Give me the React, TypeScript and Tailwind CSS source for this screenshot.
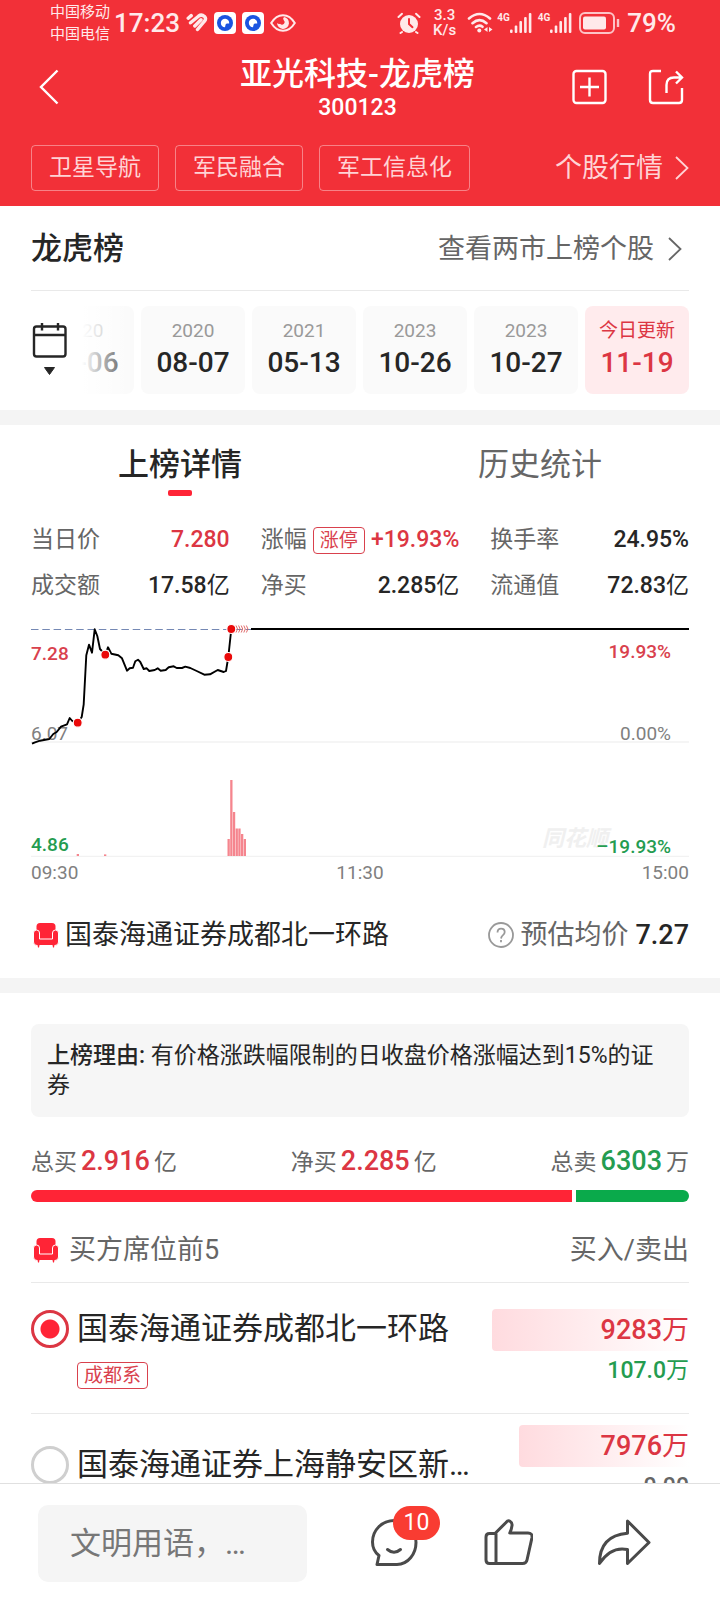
import { useState } from "react";

const tags = ["卫星导航", "军民融合", "军工信息化"];

const dates = [
  { year: "2020", day: "07-06" },
  { year: "2020", day: "08-07" },
  { year: "2021", day: "05-13" },
  { year: "2023", day: "10-26" },
  { year: "2023", day: "10-27" },
  { year: "今日更新", day: "11-19", active: true },
];

const stats = [
  { label: "当日价", value: "7.280", rise: true },
  { label: "涨幅", value: "+19.93%", rise: true, badge: "涨停" },
  { label: "换手率", value: "24.95%" },
  { label: "成交额", value: "17.58", unit: "亿" },
  { label: "净买", value: "2.285", unit: "亿" },
  { label: "流通值", value: "72.83", unit: "亿" },
];

const seats = [
  { id: "seat1", name: "国泰海通证券成都北一环路", tag: "成都系", buy: "9283", sell: "107.0", sellUnit: "万", share: 100 },
  { id: "seat2", name: "国泰海通证券上海静安区新…", buy: "7976", sell: "0.00", share: 86 },
];

const pricePath =
  "M1 126.7 4 125.3 9 123.7 18.3 122 22.3 117 25.7 115 30 109.7 36 107.3 38.7 101 41.3 104 46.7 105.7 50.7 100 52.7 87.3 55.3 38.3 58 27.7 61 35.7 63.7 12.3 66.3 19 69 32 74.3 37.7 77 30.3 80.3 36.7 87.3 38.3 91 41.3 96 53.7 98.7 51.3 102 50.7 104.3 44.3 107 42.7 109.3 45 112.7 52 115.7 51.3 118.3 54 123.7 53 126.7 51.3 129.7 53.7 134.7 53 137.7 50.3 142.7 49.3 145.7 51 151 51 154.3 49.7 159.3 51 165.7 54 173.3 57.7 179 57.3 186.7 53 192.7 55 195 54 197.3 40 200.3 12";

const volumes = [
  [196.5, 17],
  [199.2, 76],
  [201.9, 44],
  [204.6, 27.5],
  [207.3, 27.5],
  [210, 22],
  [212.7, 17],
  [45.7, 2],
  [73, 1.6],
];

function Chevron({ className }: { className: string }) {
  return (
    <svg viewBox="0 0 14 24" className={className} fill="none" stroke="currentColor" strokeWidth="1.8" aria-hidden="true">
      <path d="M1 1 12.5 12 1 23" />
    </svg>
  );
}

function Armchair() {
  return (
    <svg viewBox="0 0 26 26" className="size-[26px] shrink-0" fill="#ff2436" aria-hidden="true">
      <path d="M3.500 8V4.500Q3.500 1 7 1h12q3.500 0 3.500 3.500V18h-19z" />
      <path d="M.5 11q0-3 3-3t3 3v6h13v-6q0-3 3-3t3 3v9q0 3.500-3.500 3.500H4Q.5 23.500.5 20z" stroke="#fff" strokeWidth="1" />
      <path d="M4.500 23h2l-.5 2.500h-1zM19.500 23h2l-.5 2.500h-1z" />
    </svg>
  );
}

function AppBadge() {
  return (
    <svg viewBox="0 0 22 22" className="size-[22px]" aria-hidden="true">
      <rect width="22" height="22" rx="4" fill="#fff" />
      <circle cx="11" cy="11" r="8" fill="#1b54e0" />
      <path d="M11 15.200A4.200 4.200 0 1 1 15.200 11.500L13 11.500Q11.500 11.500 11.500 13z" fill="#fff" />
    </svg>
  );
}

function Signal() {
  return (
    <div className="flex items-start">
      <span className="text-[10px] leading-[12px] font-bold">4G</span>
      <svg viewBox="0 0 23 22" className="h-[22px] w-[23px]" fill="currentColor" aria-hidden="true">
        <rect x="0" y="17.500" width="2.600" height="3.500" rx="1" />
        <rect x="4.700" y="13.500" width="2.600" height="7.500" rx="1" />
        <rect x="9.400" y="9" width="2.600" height="12" rx="1" />
        <rect x="14.100" y="5" width="2.600" height="16" rx="1" />
        <rect x="18.800" y="1" width="2.600" height="20" rx="1" />
      </svg>
    </div>
  );
}

function StatusBar() {
  return (
    <div className="flex h-[46px] items-center justify-between pr-[44px] pl-[50px] text-[#ffe9ea]">
      <div className="flex items-center">
        <div className="text-[15px] leading-[22px]">
          <div>中国移动</div>
          <div>中国电信</div>
        </div>
        <span className="ml-1 text-[26px] leading-[30px] font-medium">17:23</span>
        <svg viewBox="0 0 22 20" className="ml-[6px] h-5 w-[22px]" fill="none" stroke="currentColor" strokeWidth="3.400" strokeLinecap="round" strokeLinejoin="round" aria-hidden="true">
          <path d="M2.200 5.200 5.200 2.600M4.500 9.800 12.500 3.200q3-2.300 6 .3 2.200 2.300-.3 5L11.500 16.500M8.800 13 15 6.800" />
        </svg>
        <div className="ml-[6px] flex gap-[6px]">
          <AppBadge />
          <AppBadge />
        </div>
        <svg viewBox="0 0 26 18" className="ml-[6px] h-[18px] w-[26px]" fill="none" stroke="currentColor" strokeWidth="2" aria-hidden="true">
          <path d="M1.200 9Q6 1.200 13 1.200T24.800 9Q20 16.800 13 16.800T1.200 9z" />
          <path d="M14 3a6 6 0 1 1-7 6q1.500 1.500 3 .8 2 1.700 4 0 1.500-2-.5-4-1-1.300.5-2.800z" fill="currentColor" stroke="none" />
        </svg>
      </div>
      <div className="flex items-center">
        <svg viewBox="0 0 24 22" className="h-[22px] w-6" fill="none" stroke="currentColor" strokeWidth="2" strokeLinecap="round" aria-hidden="true">
          <circle cx="12" cy="12" r="9" fill="currentColor" stroke="none" />
          <path d="M1.500 5 5 1.800M22.500 5 19 1.800M5 20l-1.500 1M19 20l1.500 1" />
          <path d="M12 7v5l3.500 3.200" stroke="#f23038" />
        </svg>
        <div className="ml-[12px] text-center text-[15px] leading-[15px] font-medium">
          <div>3.3</div>
          <div>K/s</div>
        </div>
        <svg viewBox="0 0 26 22" className="ml-[11px] h-[22px] w-[26px]" fill="none" stroke="currentColor" strokeWidth="2.600" strokeLinecap="round" aria-hidden="true">
          <path d="M2 6.500Q12.500-2.500 23 6.500M5.500 11.200q7-6 14 0M9 15q3.500-2.500 6.500-.2" />
          <circle cx="12.300" cy="18.500" r="2" fill="currentColor" stroke="none" />
          <path d="M20.500 15v5l-3.500-2.500zM22 15v5l3.500-2.500z" fill="currentColor" stroke="none" />
        </svg>
        <div className="ml-1 flex gap-[5px]">
          <Signal />
          <Signal />
        </div>
        <svg viewBox="0 0 42 22" className="ml-[6px] h-[22px] w-[42px]" fill="none" aria-hidden="true">
          <rect x="1" y="1" width="34" height="20" rx="5" stroke="currentColor" strokeWidth="2" opacity=".8" />
          <rect x="4" y="4.500" width="23" height="13" rx="2" fill="currentColor" />
          <path d="M39 7v8" stroke="currentColor" strokeWidth="2.400" opacity=".8" />
        </svg>
        <span className="ml-[6px] text-[26px] leading-[30px] font-medium">79%</span>
      </div>
    </div>
  );
}

function Header() {
  return (
    <header className="shrink-0 bg-[#f23038] pb-[15px] text-white">
      <StatusBar />
      <div className="grid h-[82px] grid-cols-[1fr_auto_1fr] items-center pr-[36px] pl-[31px]">
        <button type="button" aria-label="返回" className="justify-self-start px-2">
          <svg viewBox="0 0 20 36" className="h-9 w-5" fill="none" stroke="currentColor" strokeWidth="2.400" aria-hidden="true">
            <path d="M18.500 1.500 2 18l16.500 16.500" />
          </svg>
        </button>
        <div className="pt-[3px] text-center">
          <h1 className="text-[32px] leading-[38px] font-medium">亚光科技-龙虎榜</h1>
          <div className="text-[23px] leading-[30px] font-medium">300123</div>
        </div>
        <div className="flex gap-10 justify-self-end">
          <button type="button" aria-label="添加自选">
            <svg viewBox="0 0 36 36" className="size-9" fill="none" stroke="currentColor" strokeWidth="2.400" aria-hidden="true">
              <rect x="1.500" y="2" width="32" height="32" rx="3" />
              <path d="M8 18h19M17.500 8.500v19" />
            </svg>
          </button>
          <button type="button" aria-label="分享">
            <svg viewBox="0 0 36 36" className="size-9" fill="none" stroke="currentColor" strokeWidth="2.400" aria-hidden="true">
              <path d="M13 2H5Q2 2 2 5v26q0 3 3 3h26q3 0 3-3V19" />
              <path d="M18.500 24v-8q0-7.500 7.500-7.500h8M28 2.500l6 6-6 6" />
            </svg>
          </button>
        </div>
      </div>
      <div className="mt-[17px] flex items-center justify-between px-[31px] text-[#ffd3d5]">
        <div className="flex gap-4">
          {tags.map((t) => (
            <a key={t} href="#" className="rounded-[4px] border border-white/40 px-[17px] text-[23px] leading-[44px]">
              {t}
            </a>
          ))}
        </div>
        <a href="#" className="flex items-center gap-3 text-[27px] leading-[44px]">
          个股行情
          <Chevron className="h-6 w-[14px]" />
        </a>
      </div>
    </header>
  );
}

function DatePicker() {
  return (
    <section className="border-b-[15px] border-[#f4f4f4] px-[31px] pb-4">
      <div className="flex h-[85px] items-center justify-between border-b border-[#e9e9e9] pt-[2px]">
        <h2 className="text-[31px] leading-[40px] font-medium text-[#262626]">龙虎榜</h2>
        <a href="#" className="flex items-center gap-[14px] pr-[7px] text-[27px] leading-[40px] text-[#666]">
          查看两市上榜个股
          <Chevron className="h-6 w-[14px]" />
        </a>
      </div>
      <div className="mt-[15px] flex items-center">
        <button type="button" aria-label="选择日期" className="w-[51px] shrink-0">
          <svg viewBox="0 0 36 54" className="h-[54px] w-9" fill="none" stroke="#262626" strokeWidth="2.400" aria-hidden="true">
            <rect x="3" y="3.500" width="31.500" height="30" rx="2.500" />
            <path d="M3 12h31.500M11 0v7.500M27 0v7.500" />
            <path d="M13.500 44.500h10l-5 7z" fill="#262626" stroke="#262626" strokeWidth="1" />
          </svg>
        </button>
        <div className="relative flex min-w-0 flex-1 justify-end gap-[7px] overflow-hidden">
          {dates.map((d) => (
            <button
              key={d.day}
              type="button"
              className={
                d.active
                  ? "flex h-[88px] w-[104px] shrink-0 flex-col items-center rounded-lg bg-[#ffebed] pt-[10px] text-[#dc3643]"
                  : "flex h-[88px] w-[104px] shrink-0 flex-col items-center rounded-lg bg-[#fafafa] pt-[10px] text-[#262626]"
              }
            >
              <span className={d.active ? "text-[19px] leading-[30px]" : "text-[19px] leading-[30px] text-[#999]"}>{d.year}</span>
              <span className="text-[28px] leading-[34px] font-medium">{d.day}</span>
            </button>
          ))}
          <div className="absolute inset-y-0 left-0 w-12 bg-linear-to-r from-white to-white/20" />
        </div>
      </div>
    </section>
  );
}

function Chart() {
  return (
    <div>
      <svg viewBox="0 0 658 240" className="block w-full" role="img" aria-label="分时走势" fontSize="19">
        <path d="M0 125h658M0 239.500h658" stroke="#f2f2f2" strokeWidth="1.500" />
        <text x="511" y="229" fontSize="22" fontWeight="700" fontStyle="italic" fill="#f0f0f0">同花顺</text>
        <g fill="#808080">
          <text x="0" y="123">6.07</text>
          <text x="640" y="123" textAnchor="end">0.00%</text>
        </g>
        <g fill="#d9414d" fontWeight="500">
          <text x="0" y="43">7.28</text>
          <text x="640" y="41" textAnchor="end">19.93%</text>
        </g>
        <g fill="#249c50" fontWeight="500">
          <text x="0" y="234">4.86</text>
          <text x="640" y="236" textAnchor="end">–19.93%</text>
        </g>
        <path d="M0 12.500h658" stroke="#7488b4" strokeWidth="1.200" strokeDasharray="7.500 3.800" />
        <path d={pricePath} fill="none" stroke="#000" strokeWidth="1.900" strokeLinejoin="round" />
        <path d="M220 12h438" stroke="#000" strokeWidth="2" />
        <g fill="none" stroke="#dc5a5a" strokeWidth=".9">
          {[205, 207.6, 210.2, 212.8, 215.4].map((x) => (
            <path key={x} d={`M${x} 8.500q3 3.500 0 7`} />
          ))}
        </g>
        {volumes.map(([x, h]) => (
          <rect key={x} x={x} y={239 - h} width="2.300" height={h} fill="#f5858e" />
        ))}
        <g fill="#ea0a0a" stroke="#fff" strokeWidth="1.200">
          <circle cx="46.700" cy="105.700" r="4.500" />
          <circle cx="74.300" cy="37.700" r="4.500" />
          <circle cx="197.300" cy="40" r="4.500" />
          <circle cx="200.300" cy="12" r="4.500" />
        </g>
      </svg>
      <div className="flex justify-between text-[19px] leading-[32px] text-[#808080]">
        <span>09:30</span>
        <span>11:30</span>
        <span>15:00</span>
      </div>
    </div>
  );
}

function Detail() {
  const [tab, setTab] = useState(0);
  return (
    <section className="border-b-[15px] border-[#f4f4f4]">
      <div className="flex" role="tablist">
        {["上榜详情", "历史统计"].map((t, i) => (
          <button
            key={t}
            type="button"
            role="tab"
            aria-selected={tab === i}
            onClick={() => setTab(i)}
            className={
              tab === i
                ? "flex flex-1 flex-col items-center pt-5 text-[31px] leading-[40px] font-medium text-[#262626]"
                : "flex flex-1 flex-col items-center pt-5 text-[31px] leading-[40px] text-[#666]"
            }
          >
            {t}
            {tab === i && <span className="mt-[5px] h-[6px] w-6 rounded-[2px] bg-[#ff2436]" />}
          </button>
        ))}
      </div>
      <div className="px-[31px]">
        <dl className="mt-[21px] grid grid-cols-3 gap-x-[31px] text-[23px] leading-[46px]">
          {stats.map((s) => (
            <div key={s.label} className="flex items-center justify-between whitespace-nowrap">
              <dt className="flex items-center gap-[6px] text-[#666]">
                {s.label}
                {s.badge && (
                  <span className="rounded-[4px] border border-[#d9414d] px-[6px] text-[19px] leading-[25px] text-[#d9414d]">{s.badge}</span>
                )}
              </dt>
              <dd className={s.rise ? "font-medium text-[#dc3643]" : "font-medium text-[#262626]"}>
                {s.value}
                {s.unit && <span className="font-normal">{s.unit}</span>}
              </dd>
            </div>
          ))}
        </dl>
        <div className="mt-2">
          <Chart />
        </div>
        <div className="flex items-center justify-between pt-[26px] pb-[23px] text-[27px] leading-[40px]">
          <div className="flex items-center gap-[6px] pl-[2px] text-[#262626]">
            <Armchair />
            国泰海通证券成都北一环路
          </div>
          <div className="flex items-center text-[#666]">
            <button type="button" aria-label="说明" className="mr-[6px]">
              <svg viewBox="0 0 26 26" className="size-[26px]" fill="none" stroke="#999" strokeWidth="1.800" aria-hidden="true">
                <circle cx="13" cy="13" r="12" />
                <path d="M9.500 10.500q0-3.800 3.600-3.800t3.600 3.400q0 1.700-1.700 3T13 16.500M13 18v2.200" />
              </svg>
            </button>
            预估均价
            <span className="ml-[7px] font-medium text-[#262626]">7.27</span>
          </div>
        </div>
      </div>
    </section>
  );
}

function Total({ label, value, unit, sell }: { label: string; value: string; unit: string; sell?: boolean }) {
  return (
    <div className="flex items-baseline gap-1">
      <span>{label}</span>
      <span className={sell ? "text-[27px] font-medium text-[#249c50]" : "text-[27px] font-medium text-[#dc3643]"}>{value}</span>
      <span>{unit}</span>
    </div>
  );
}

function Seats() {
  const [picked, setPicked] = useState("seat1");
  return (
    <section className="px-[31px] pt-[31px]">
      <p className="rounded-lg bg-[#f6f6f6] px-4 pt-[17px] pb-4 text-[23px] leading-[30px] text-[#262626]">
        <strong className="font-medium">上榜理由:</strong> 有价格涨跌幅限制的日收盘价格涨幅达到15%的证券
      </p>
      <div className="mt-6 flex justify-between text-[23px] leading-[40px] text-[#666]">
        <Total label="总买" value="2.916" unit="亿" />
        <Total label="净买" value="2.285" unit="亿" />
        <Total label="总卖" value="6303" unit="万" sell />
      </div>
      <div className="mt-[7px] flex h-3 gap-1 overflow-hidden rounded-full">
        <div className="flex-[541] bg-[#ff2436]" />
        <div className="flex-[113] bg-[#0aaa4b]" />
      </div>
      <div className="flex h-[81px] items-center justify-between border-b border-[#e9e9e9] pt-[16px] text-[27px] text-[#666]">
        <h3 className="flex items-center gap-[10px] pl-[2px]">
          <Armchair />
          买方席位前5
        </h3>
        <span>买入/卖出</span>
      </div>
      <ul>
        {seats.map((s) => (
          <li
            key={s.id}
            className={
              s.tag
                ? "flex items-center gap-1 border-b border-[#e9e9e9] pt-[26px] pb-6"
                : "flex items-center gap-1 border-b border-[#e9e9e9] py-[11px]"
            }
          >
            <div className="flex min-w-0 flex-1 flex-col items-start">
              <div className="flex items-center gap-2">
                <input
                  id={s.id}
                  type="radio"
                  name="seat"
                  checked={picked === s.id}
                  onChange={() => setPicked(s.id)}
                  className="size-[38px] shrink-0 appearance-none rounded-full border-[3px] border-[#cfcfcf] checked:border-[#dc3643] checked:bg-[radial-gradient(circle,#ff2436_9px,transparent_10px)]"
                />
                <label htmlFor={s.id} className="text-[31px] leading-[40px] whitespace-nowrap text-[#262626]">
                  {s.name}
                </label>
              </div>
              {s.tag && (
                <span className="mt-[13px] ml-[46px] rounded-[4px] border border-[#d9414d] px-[6px] text-[19px] leading-[25px] text-[#d9414d]">
                  {s.tag}
                </span>
              )}
            </div>
            <div className="flex w-[30%] shrink-0 flex-col items-end gap-[2px]">
              <div
                className="rounded-l-[4px] bg-linear-to-r from-[#ffdbdf] to-white text-right text-[27px] leading-[42px] font-medium text-[#dc3643]"
                style={{ width: `${s.share}%` }}
              >
                {s.buy}
                <span className="font-normal">万</span>
              </div>
              <div className={s.tag ? "text-[23px] leading-[36px] font-medium text-[#249c50]" : "text-[23px] leading-[36px] font-medium text-[#666]"}>
                {s.sell}
                {s.sellUnit && <span className="font-normal">{s.sellUnit}</span>}
              </div>
            </div>
          </li>
        ))}
      </ul>
    </section>
  );
}

function Footer() {
  return (
    <footer className="flex h-[117px] shrink-0 items-center border-t border-[#e0e0e0] bg-white pt-[2px] pr-[69px] pl-[38px] text-[#4a4a4a]">
      <input
        type="text"
        aria-label="评论"
        placeholder="文明用语，…"
        className="h-[77px] w-[269px] rounded-[10px] bg-[#f5f5f5] px-8 text-[31px] text-[#262626] outline-none placeholder:text-[#777]"
      />
      <div className="ml-[63px] flex flex-1 justify-between">
        <button type="button" aria-label="评论列表" className="relative">
          <svg viewBox="0 0 48 50" className="h-[50px] w-12" fill="none" stroke="currentColor" strokeWidth="3" strokeLinejoin="round" strokeLinecap="round" aria-hidden="true">
            <path d="M24.500 2.500C12 2.500 2.500 12 2.500 24c0 5.500 2.500 10.500 6.500 13.500L7 46.500h20C38 46.500 46 36 46 24.500S37 2.500 24.500 2.500z" />
            <path d="M17.500 31.500q6.500 5.500 13 0" />
          </svg>
          <span className="absolute -top-3 left-[23px] h-[34px] w-[47px] rounded-full bg-[#f93c32] text-center text-[23px] leading-[34px] text-white">10</span>
        </button>
        <button type="button" aria-label="点赞">
          <svg viewBox="0 0 50 50" className="size-[50px]" fill="none" stroke="currentColor" strokeWidth="3" strokeLinejoin="round" aria-hidden="true">
            <path d="M3 19q0-3.500 3.500-3.500H12L23 4.500q2-2.500 4-1.300 2.500 1.500 2 4.500-.4 3.500-2.200 7.300H45q4.500 0 4 4.500l-5 22.500Q43.300 45.500 39.500 45.500H6.500q-3.500 0-3.500-3.500zM13 15.500v30" />
          </svg>
        </button>
        <button type="button" aria-label="转发">
          <svg viewBox="0 0 54 50" className="h-[50px] w-[54px]" fill="none" stroke="currentColor" strokeWidth="3" strokeLinejoin="round" aria-hidden="true">
            <path d="M30.500 3 52 24.500 30.500 45.500V31.500Q14 28 2.500 45.500 2.500 17.500 30.500 15.200z" />
          </svg>
        </button>
      </div>
    </footer>
  );
}

export default function App() {
  return (
    <div className="flex h-screen flex-col bg-white font-['Roboto','Noto_Sans_CJK_SC',sans-serif]">
      <Header />
      <main className="min-h-0 flex-1 overflow-y-auto [scrollbar-width:none]">
        <DatePicker />
        <Detail />
        <Seats />
      </main>
      <Footer />
    </div>
  );
}
